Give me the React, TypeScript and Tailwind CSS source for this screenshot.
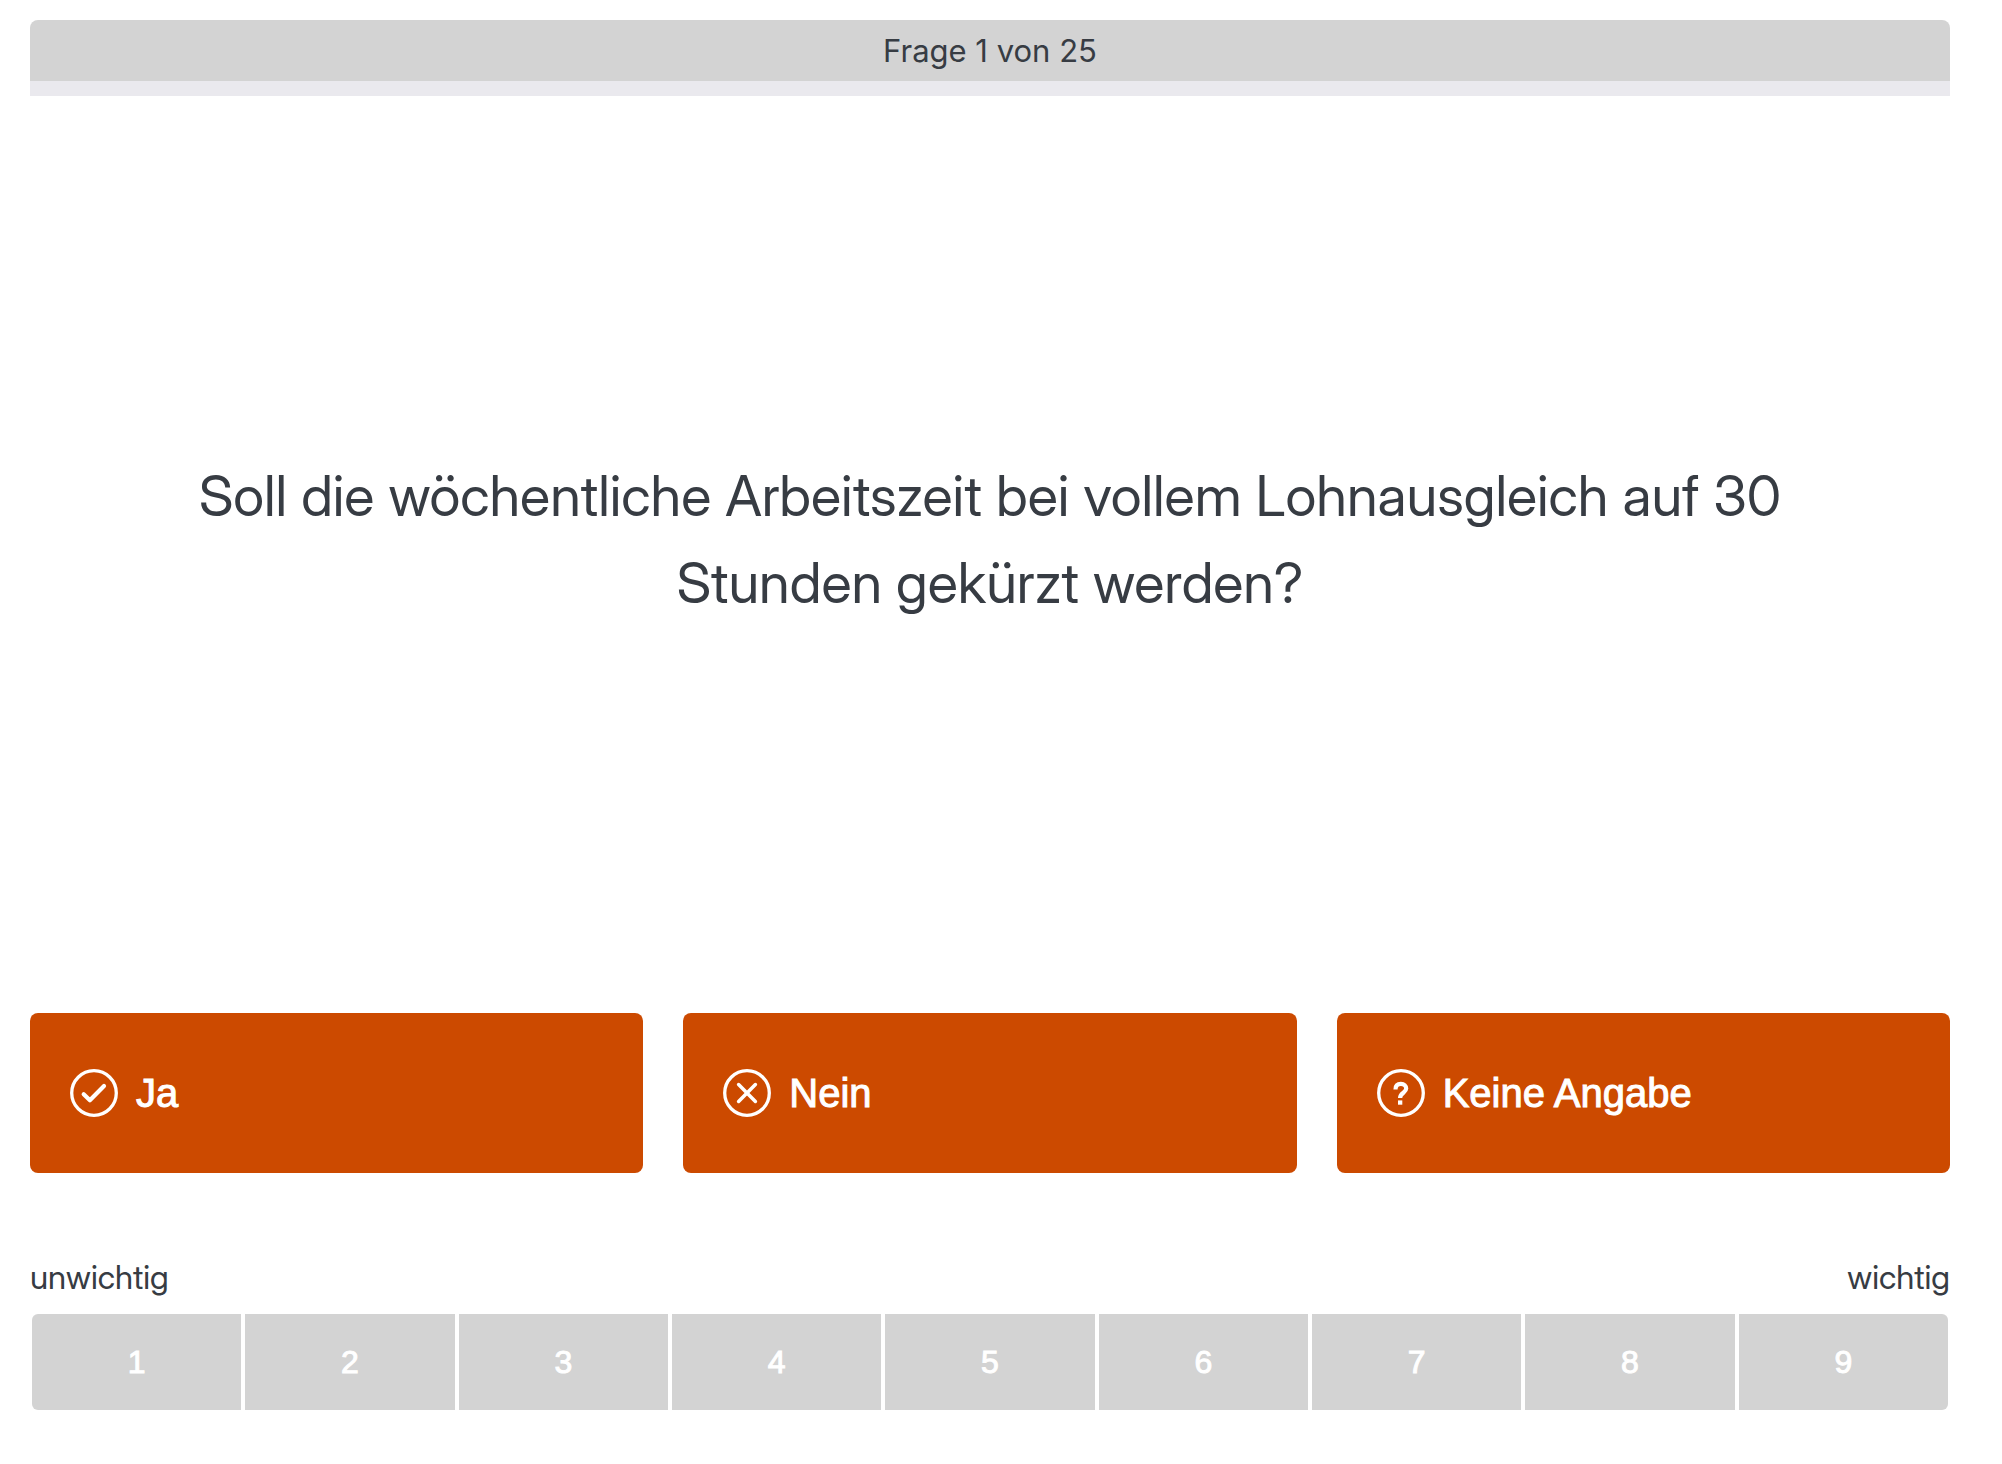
import { useState, type ReactNode } from "react";

function CircleIcon({ children }: { children: ReactNode }) {
  return (
    <svg viewBox="0 0 48 48" fill="none" stroke="currentColor" strokeWidth="3.3" className="size-12 shrink-0" aria-hidden="true">
      <circle cx="24" cy="24" r="22.3" />
      {children}
    </svg>
  );
}

const answers = [
  {
    label: "Ja",
    icon: <path d="M13.7 25.2 19.9 31.2 34 17.1" strokeWidth="4.2" strokeLinecap="round" strokeLinejoin="round" />,
  },
  {
    label: "Nein",
    icon: <path d="M15.6 15.6 32.4 32.4M32.4 15.6 15.6 32.4" strokeWidth="3.5" strokeLinecap="round" />,
  },
  {
    label: "Keine Angabe",
    icon: (
      <>
        <path d="M18.5 20.4C18.5 16.8 20.6 14.9 23.9 14.9S29.2 16.8 29.2 19.6C29.2 23.8 23.1 23.8 23.1 29" strokeWidth="4.2" />
        <path d="M21 31.4h4.3v4.3H21z" fill="currentColor" stroke="none" />
      </>
    ),
  },
];

const weights = [1, 2, 3, 4, 5, 6, 7, 8, 9];

export default function App() {
  const [answer, setAnswer] = useState<string | null>(null);
  const [weight, setWeight] = useState<number | null>(null);

  return (
    <main className="flex min-h-screen flex-col bg-white pt-5 pr-[52px] pb-[54px] pl-[30px] font-['Inter_Display','Inter',sans-serif] text-[#373c43]">
      <header className="overflow-hidden rounded-t-lg">
        <p className="bg-[#d3d3d3] pt-[7px] pb-1.5 text-center font-['Inter',sans-serif] text-[31px] leading-[48px]">
          Frage 1 von 25
        </p>
        <div className="h-[15px] bg-[#eae9ee]" />
      </header>

      <section className="flex grow items-center justify-center px-40 pt-6 pb-[54px]">
        <h1 className="text-center text-[56px] leading-[87px] font-normal">
          Soll die wöchentliche Arbeitszeit bei vollem Lohnausgleich auf 30 Stunden gekürzt werden?
        </h1>
      </section>

      <div className="grid grid-cols-3 gap-10 font-['Liberation_Sans',sans-serif]">
        {answers.map(({ label, icon }) => (
          <button
            key={label}
            type="button"
            aria-pressed={answer === label}
            onClick={() => setAnswer(label)}
            className="flex h-40 cursor-pointer items-center gap-[18px] rounded-lg bg-[#cc4a00] px-10 text-[40px] leading-[48px] text-white [-webkit-text-stroke:1px_white]"
          >
            <CircleIcon>{icon}</CircleIcon>
            {label}
          </button>
        ))}
      </div>

      <div className="mt-20 flex justify-between pb-[13px] text-[33px] leading-[48px]">
        <span>unwichtig</span>
        <span>wichtig</span>
      </div>

      <div className="mx-0.5 grid grid-cols-9 gap-1 overflow-hidden rounded-md font-['Liberation_Sans',sans-serif]">
        {weights.map((n) => (
          <button
            key={n}
            type="button"
            aria-pressed={weight === n}
            onClick={() => setWeight(n)}
            className="h-24 cursor-pointer bg-[#d3d3d3] text-[32px] leading-[48px] text-white [-webkit-text-stroke:1px_white]"
          >
            {n}
          </button>
        ))}
      </div>
    </main>
  );
}
